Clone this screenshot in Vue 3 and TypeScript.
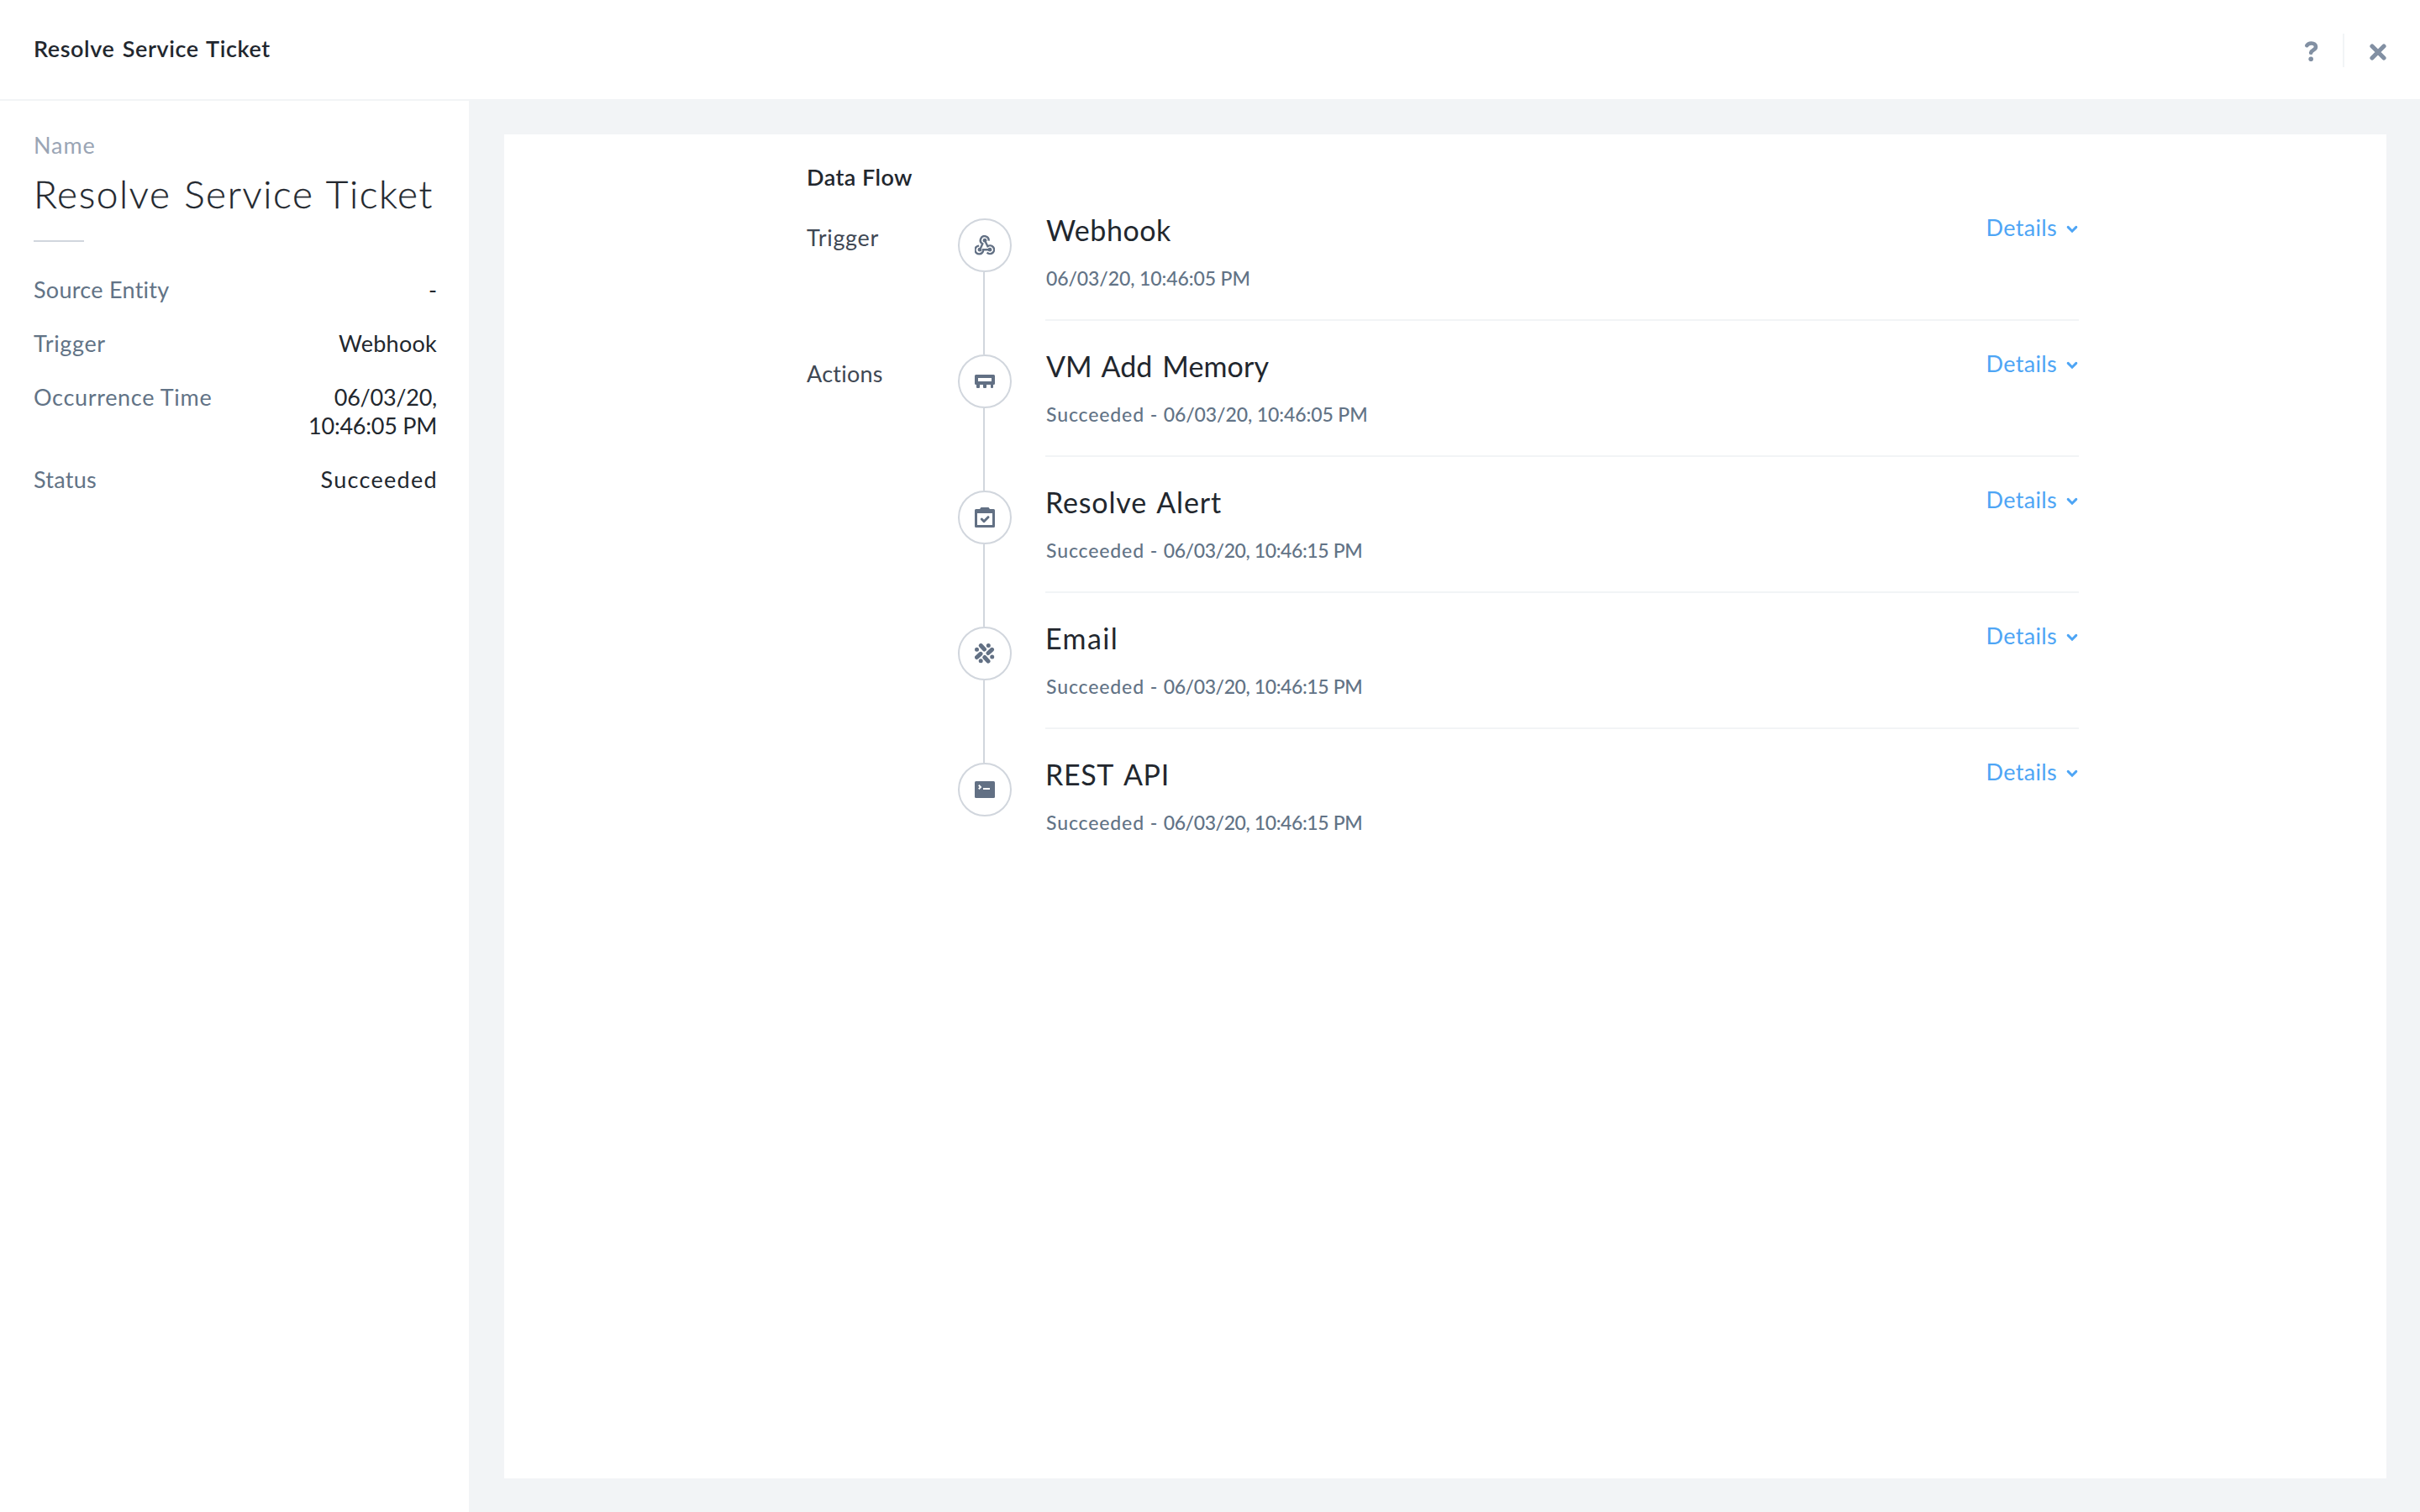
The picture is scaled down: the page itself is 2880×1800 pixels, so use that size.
<script setup lang="ts">
interface Property {
  label: string
  value: string
  labelClass?: string
  valueClass?: string
}

interface Step {
  group: string
  kind: 'webhook' | 'memory' | 'alert' | 'email' | 'rest'
  title: string
  outcome: string
  time: string
}

const properties: Property[] = [
  { label: 'Source Entity', value: '-' },
  { label: 'Trigger', value: 'Webhook', labelClass: 'loose', valueClass: 'loose' },
  { label: 'Occurrence Time', value: '06/03/20, 10:46:05 PM', labelClass: 'loose', valueClass: 'tight' },
  { label: 'Status', value: 'Succeeded', valueClass: 'wide' },
]

const steps: Step[] = [
  { group: 'Trigger', kind: 'webhook', title: 'Webhook', outcome: '', time: '06/03/20, 10:46:05 PM' },
  { group: 'Actions', kind: 'memory', title: 'VM Add Memory', outcome: 'Succeeded - ', time: '06/03/20, 10:46:05 PM' },
  { group: '', kind: 'alert', title: 'Resolve Alert', outcome: 'Succeeded - ', time: '06/03/20, 10:46:15 PM' },
  { group: '', kind: 'email', title: 'Email', outcome: 'Succeeded - ', time: '06/03/20, 10:46:15 PM' },
  { group: '', kind: 'rest', title: 'REST API', outcome: 'Succeeded - ', time: '06/03/20, 10:46:15 PM' },
]
</script>

<template>
  <div class="page">
    <header class="topbar">
      <h1 class="topbar-title">Resolve Service Ticket</h1>
      <div class="topbar-actions">
        <svg class="help" width="16" height="24" viewBox="0 0 16 24">
          <path d="M2.4 5.2C3.4 3.4 5.3 2.5 7.7 2.5c3 0 5.3 1.6 5.3 4.3 0 4-5.2 3.2-5.8 7" fill="none" stroke="currentColor" stroke-width="4.6" stroke-linecap="round" />
          <circle cx="7.2" cy="21.2" r="2.8" fill="currentColor" />
        </svg>
        <span class="separator"></span>
        <svg class="close" width="20" height="20" viewBox="0 0 20 20">
          <path d="M3 3l14 14M17 3L3 17" stroke="currentColor" stroke-width="5.2" stroke-linecap="round" />
        </svg>
      </div>
    </header>
    <div class="body">
      <aside class="sidebar">
        <div class="name-label">Name</div>
        <h2 class="name">Resolve Service Ticket</h2>
        <div class="rule"></div>
        <dl class="properties">
          <div v-for="p in properties" :key="p.label" class="property">
            <dt :class="p.labelClass">{{ p.label }}</dt>
            <dd :class="p.valueClass">{{ p.value }}</dd>
          </div>
        </dl>
      </aside>
      <main class="main">
        <section class="panel">
          <h3 class="flow-title">Data Flow</h3>
          <div v-for="s in steps" :key="s.kind" class="step" :class="s.kind">
            <div class="group">{{ s.group }}</div>
            <div class="track">
              <span class="line line-top"></span>
              <span class="node">
                <svg width="24" height="24" viewBox="0 0 24 24">
                  <g v-if="s.kind === 'webhook'" fill="none" stroke="currentColor" stroke-width="2.4">
                    <path d="M16.6 6.6A4.9 4.9 0 1 0 9.3 10.3L6.3 17" />
                    <path d="M5.2 12.6A4.9 4.9 0 1 0 10.2 17.3H18" />
                    <path d="M12 6.2L15.4 13.2A4.9 4.9 0 1 1 14.6 20.6" />
                    <g fill="currentColor" stroke="none">
                      <circle cx="12" cy="6.2" r="2.4" />
                      <circle cx="6" cy="17.2" r="2.4" />
                      <circle cx="18" cy="17.2" r="2.4" />
                    </g>
                  </g>
                  <path v-else-if="s.kind === 'memory'" fill="currentColor" fill-rule="evenodd" d="M1.5 4h21A1.5 1.5 0 0 1 24 5.5V14.5A1.5 1.5 0 0 1 22.5 16H22v3a1 1 0 0 1-1 1h-1a1 1 0 0 1-1-1v-3h-5v3a1 1 0 0 1-1 1h-2a1 1 0 0 1-1-1v-3H6v3a1 1 0 0 1-1 1H3a1 1 0 0 1-1-1v-3h-.5A1.5 1.5 0 0 1 0 14.5V5.5A1.5 1.5 0 0 1 1.5 4zM4 8v4h16V8z" />
                  <g v-else-if="s.kind === 'alert'">
                    <path fill="currentColor" fill-rule="evenodd" d="M7.5 0h9L18 2h4.5A1.5 1.5 0 0 1 24 3.5v19a1.5 1.5 0 0 1-1.5 1.5h-21A1.5 1.5 0 0 1 0 22.5v-19A1.5 1.5 0 0 1 1.5 2H6zM3 7v14h18V7z" />
                    <path d="M8.3 14l2.7 2.7 5-5" fill="none" stroke="currentColor" stroke-width="3" stroke-linecap="round" stroke-linejoin="round" />
                  </g>
                  <g v-else-if="s.kind === 'email'" fill="none" stroke="currentColor" stroke-width="5" stroke-linecap="round">
                    <path d="M7.3 2.5l4.2 4.5M20.5 7.3l-4.5 4.2M2.5 16.5l4.5-4.2M11.8 16.5l4.2 4.7" />
                    <path d="M16.3 2.5h.01M2.5 7.3h.01M20.7 16h.01M7.2 20.8h.01" />
                  </g>
                  <g v-else>
                    <rect y="2" width="24" height="20" rx="1.5" fill="currentColor" />
                    <path d="M4.8 6.6L7 9l-2.2 2.4M10 11h8" fill="none" stroke="#fff" stroke-width="2" />
                  </g>
                </svg>
              </span>
              <span class="line line-bottom"></span>
            </div>
            <div class="content">
              <div>
                <div class="step-title">{{ s.title }}</div>
                <div class="step-status"><span class="outcome">{{ s.outcome }}</span><span class="time">{{ s.time }}</span></div>
              </div>
              <a class="details">
                <span>Details</span>
                <svg width="14" height="10" viewBox="0 0 14 10">
                  <path d="M2.2 2.4L7 7.2l4.8-4.8" fill="none" stroke="currentColor" stroke-width="3" stroke-linecap="round" />
                </svg>
              </a>
            </div>
          </div>
        </section>
      </main>
    </div>
  </div>
</template>

<style>
body { margin: 0; background: #f2f4f6; }
</style>

<style scoped>
.page {
  width: 2880px;
  height: 1800px;
  display: flex;
  flex-direction: column;
  overflow: hidden;
  background: #f2f4f6;
  color: #22272e;
  font: 400 27px/34px Lato, "Liberation Sans", sans-serif;
}
h1, h2, h3, dl, dd { margin: 0; }

.topbar {
  box-sizing: border-box;
  height: 120px;
  padding: 40px 40px 0;
  display: flex;
  justify-content: space-between;
  align-items: flex-start;
  background: #fff;
  border-bottom: 2px solid #f2f4f6;
}
.topbar-title { padding-top: 1px; font-size: 27px; line-height: 34px; font-weight: 600; letter-spacing: .58px; word-spacing: 2px; }
.topbar-actions { display: flex; align-items: flex-start; color: #8290a3; }
.help { margin: 9px 29px 0 0; }
.separator { width: 2px; height: 40px; margin-right: 30px; background: #f2f4f6; }
.close { margin-top: 12px; }

.body { flex: 1; display: flex; min-height: 0; }
.sidebar { box-sizing: border-box; width: 558px; padding: 36px 38px 0 40px; background: #fff; }
.name-label { color: #9aa5b5; letter-spacing: .88px; }
.name { margin-top: 14px; font-size: 46px; line-height: 54px; font-weight: 300; letter-spacing: 1.6px; word-spacing: 1.5px; white-space: nowrap; -webkit-text-stroke: .3px currentColor; }
.rule { width: 60px; height: 2px; margin-top: 28px; background: #d1d6dd; }
.properties { margin-top: 40px; display: flex; flex-direction: column; gap: 30px; }
.property { display: flex; justify-content: space-between; }
.property dt { color: #627386; letter-spacing: .28px; }
.property dt.loose { letter-spacing: .67px; }
.property dd { width: 200px; text-align: right; }
.property dd.loose { letter-spacing: .25px; }
.property dd.tight { letter-spacing: -.25px; }
.property dd.wide { margin-right: -1px; letter-spacing: 1.3px; }

.main { flex: 1; padding: 40px 40px 40px 42px; display: flex; }
.panel { flex: 1; padding: 41px 366px 0 360px; background: #fff; }
.flow-title { height: 19px; font-size: 27px; line-height: 20px; font-weight: 600; letter-spacing: .45px; }

.step { height: 162px; display: flex; }
.group { width: 180px; padding-top: 46px; box-sizing: border-box; color: #3f4854; letter-spacing: .25px; }
.webhook .group { letter-spacing: .7px; }
.track { width: 64px; display: flex; flex-direction: column; }
.line { width: 2px; margin-left: 30px; background: #d1d6dd; }
.line-top { height: 40px; }
.line-bottom { flex: 1; }
.step.webhook .line-top, .step.rest .line-bottom { background: transparent; }
.node {
  box-sizing: border-box;
  width: 64px;
  height: 64px;
  border: 2px solid #d1d6dd;
  border-radius: 50%;
  display: flex;
  align-items: center;
  justify-content: center;
  color: #627084;
}
.content {
  box-sizing: border-box;
  flex: 1;
  margin-left: 40px;
  padding-top: 33px;
  display: flex;
  justify-content: space-between;
  align-items: flex-start;
  border-bottom: 2px solid #f2f4f6;
}
.rest .content { border-bottom-color: transparent; }
.step-title { font-size: 34px; line-height: 41px; white-space: nowrap; }
.webhook .step-title { padding-left: 1px; letter-spacing: .55px; }
.memory .step-title { padding-left: 1px; letter-spacing: .1px; word-spacing: 3px; }
.alert .step-title { letter-spacing: .82px; word-spacing: 3px; }
.email .step-title { letter-spacing: 1.4px; }
.rest .step-title { letter-spacing: .6px; word-spacing: 4px; }
.step-status { margin-top: 22px; padding-left: 1px; font-size: 23px; line-height: 30px; font-weight: 500; color: #627386; white-space: pre; }
.outcome { letter-spacing: .87px; }
.time { letter-spacing: -.4px; }
.webhook .time, .memory .time { letter-spacing: -.1px; }
.details { height: 34px; margin-top: 1px; padding-right: 1px; display: flex; align-items: center; gap: 11px; color: #4ea5f5; letter-spacing: .34px; }
.details svg { margin-top: 4px; }
</style>
